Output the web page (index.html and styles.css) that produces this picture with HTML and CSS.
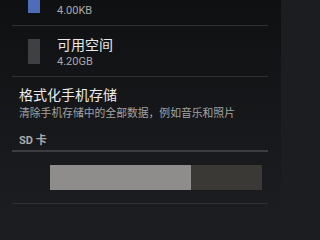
FILE: index.html
```html
<!DOCTYPE html>
<html>
<head>
<meta charset="utf-8">
<link rel="stylesheet" href="styles.css">
</head>
<body>
<div class="screen">
  <div class="list">
    <div class="item">
      <div class="swatch swatch-blue"></div>
      <div class="texts">
        <div class="label">&nbsp;</div>
        <div class="value">4.00KB</div>
      </div>
    </div>
    <div class="divider"></div>
    <div class="item">
      <div class="swatch swatch-gray"></div>
      <div class="texts">
        <div class="label">可用空间</div>
        <div class="value">4.20GB</div>
      </div>
    </div>
    <div class="divider"></div>
  </div>
  <div class="action">
    <div class="action-title">格式化手机存储</div>
    <div class="action-sub">清除手机存储中的全部数据，例如音乐和照片</div>
  </div>
  <div class="section-header">SD 卡</div>
  <div class="section-divider"></div>
  <div class="bar-row">
    <div class="bar">
      <div class="bar-used" style="width: 66.4%"></div>
    </div>
  </div>
  <div class="divider"></div>
</div>
</body>
</html>
```
FILE: styles.css
```css
html {
  margin: 0;
  padding: 0;
  background: #1b1d20;
}
body {
  margin: 0;
  padding: 0;
  width: 281px;
  height: 211px;
  overflow: hidden;
  background: linear-gradient(#0f1012, #1b1d20);
  font-family: "Roboto", "Noto Sans CJK SC", sans-serif;
  color: #e6e6e6;
}
.screen {
  display: flex;
  flex-direction: column;
}
.list {
  margin-top: -25px;
  display: flex;
  flex-direction: column;
}
.item {
  height: 50px;
  display: flex;
  align-items: center;
  padding-left: 28px;
  gap: 17px;
}
.swatch {
  width: 12px;
  height: 25px;
  flex: none;
}
.swatch-blue { background: #4d6db8; }
.swatch-gray { background: #3f4042; }
.texts {
  display: flex;
  flex-direction: column;
}
.label {
  font-family: "Noto Sans CJK SC", sans-serif;
  font-size: 14px;
  line-height: 20px;
  color: #e8e8e8;
}
.value {
  margin-top: 1px;
  font-size: 11px;
  line-height: 13px;
  color: #a9a9a9;
}
.divider {
  height: 1px;
  margin: 0 13px 0 12px;
  background: #2e3033;
  flex: none;
}
.action {
  padding: 6.5px 0 0 19px;
  display: flex;
  flex-direction: column;
}
.action-title {
  font-family: "Noto Sans CJK SC", sans-serif;
  font-size: 14px;
  line-height: 20px;
  color: #ececec;
}
.action-sub {
  font-family: "Noto Sans CJK SC", sans-serif;
  font-size: 10.8px;
  line-height: 16px;
  color: #a3a3a3;
  white-space: nowrap;
}
.section-header {
  margin-top: 14px;
  padding-left: 19px;
  font-size: 11px;
  line-height: 13px;
  font-weight: bold;
  color: #ababab;
  height: 16.5px;
}
.section-divider {
  height: 2px;
  margin: 0 13px 0 12px;
  background: #3b3d40;
}
.bar-row {
  padding: 13px 19px 13px 50px;
}
.bar {
  height: 25px;
  background: #3a3936;
  display: flex;
}
.bar-used {
  background: #8e8d8b;
  height: 100%;
}
```
